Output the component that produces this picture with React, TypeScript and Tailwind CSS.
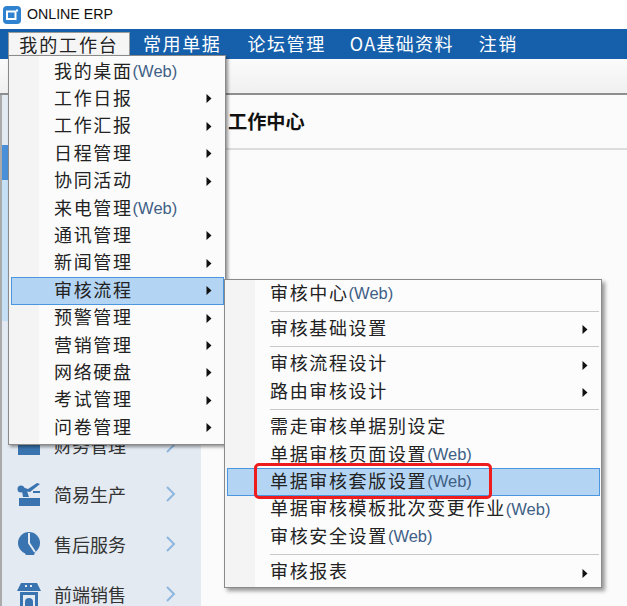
const cjk = "font-['Microsoft_YaHei','Noto_Sans_CJK_SC','Liberation_Sans',sans-serif]";

type MenuItem = { label: string; web?: boolean; arrow?: boolean; active?: boolean; sep?: boolean };

const mainItems: MenuItem[] = [
  { label: "我的桌面", web: true },
  { label: "工作日报", arrow: true },
  { label: "工作汇报", arrow: true },
  { label: "日程管理", arrow: true },
  { label: "协同活动", arrow: true },
  { label: "来电管理", web: true },
  { label: "通讯管理", arrow: true },
  { label: "新闻管理", arrow: true },
  { label: "审核流程", arrow: true, active: true },
  { label: "预警管理", arrow: true },
  { label: "营销管理", arrow: true },
  { label: "网络硬盘", arrow: true },
  { label: "考试管理", arrow: true },
  { label: "问卷管理", arrow: true },
];

const subItems: MenuItem[] = [
  { label: "审核中心", web: true },
  { label: "", sep: true },
  { label: "审核基础设置", arrow: true },
  { label: "", sep: true },
  { label: "审核流程设计", arrow: true },
  { label: "路由审核设计", arrow: true },
  { label: "", sep: true },
  { label: "需走审核单据别设定" },
  { label: "单据审核页面设置", web: true },
  { label: "单据审核套版设置", web: true, active: true },
  { label: "单据审核模板批次变更作业", web: true },
  { label: "审核安全设置", web: true },
  { label: "", sep: true },
  { label: "审核报表", arrow: true },
];

function Arrow({ className }: { className: string }) {
  return (
    <svg width="6" height="9" viewBox="0 0 6 9" className={`absolute ${className}`}>
      <path d="M0.5 0 L5.5 4.5 L0.5 9 Z" fill="#111" />
    </svg>
  );
}

function Row({ item, sub }: { item: MenuItem; sub?: boolean }) {
  if (item.sep) {
    return <div className="h-[8px] ml-[43px] mr-[1px] flex items-center"><div className="h-[1px] w-full bg-[#c8c8c8]" /></div>;
  }
  return (
    <div
      className={`relative h-[27.4px] pb-[4px] pl-[42px] flex items-center whitespace-nowrap border ${
        item.active ? "bg-[#b3d4f2] border-[#4a97e0]" : "border-transparent"
      }`}
    >
      <span className="text-[18px] leading-none tracking-[1.65px] text-[#222]">{item.label}</span>
      {item.web && (
        <span className="mt-[3px] text-[16.5px] leading-none text-[#3f5f86] font-['Liberation_Sans',sans-serif]">(Web)</span>
      )}
      {item.arrow && <Arrow className={sub ? "right-[11px] top-[9px]" : "right-[11px] top-[8px]"} />}
    </div>
  );
}

function Icon({ kind }: { kind: string }) {
  if (kind === "prod") {
    return (
      <svg width="24" height="24" viewBox="0 0 24 24" fill="#3a74b0">
        <path d="M2 16h21v8H2z" />
        <path d="M6 15L5 9h5l2 6z" />
        <circle cx="4" cy="7" r="3.5" />
        <path d="M5 5l6 2 9-6 3 1-10 8-7-1z" />
        <path d="M16 9h7v2h-7z" />
      </svg>
    );
  }
  if (kind === "service") {
    return (
      <svg width="24" height="24" viewBox="0 0 24 24" fill="#3a74b0">
        <circle cx="12" cy="11" r="11" />
        <path d="M6 18h13l-2 5H9z" />
        <path d="M12 1v10l6 9" fill="none" stroke="#e4eaf2" strokeWidth="2" />
      </svg>
    );
  }
  if (kind === "shop") {
    return (
      <svg width="24" height="24" viewBox="0 0 24 24" fill="#3a74b0">
        <path d="M4 1h16l4 8H0zM8 3v2h2V3zM13 3v2h2V3z" fillRule="evenodd" />
        <path d="M3 10h18v14H3zM6 13v11h12V13z" fillRule="evenodd" />
        <path d="M8 20a4 4 0 0 1 8 0v4H8z" />
      </svg>
    );
  }
  return (
    <svg width="24" height="24" viewBox="0 0 24 24" fill="#3a74b0">
      <path d="M1 2h22v20H1z M5 7l3 4h8l3-4z" fillRule="evenodd" />
    </svg>
  );
}

function SideItem({ label, kind }: { label: string; kind: string }) {
  return (
    <div className="h-[49.6px] flex items-center pl-[17px] shrink-0">
      <Icon kind={kind} />
      <span className="ml-[13px] w-[112px] text-[18px] leading-none text-[#333]">{label}</span>
      <svg width="10" height="16" viewBox="0 0 10 16" fill="none" stroke="#8db7de" strokeWidth="2">
        <path d="M1 1l7 7-7 7" />
      </svg>
    </div>
  );
}

export default function App() {
  return (
    <div className={`relative w-[627px] h-[606px] overflow-hidden bg-white ${cjk}`}>
      {/* title bar */}
      <div className="h-[29px] flex items-center pl-[3px] bg-white">
        <svg width="18" height="18" viewBox="0 0 18 18">
          <rect x="0" y="0" width="18" height="18" rx="4" fill="#2f82cf" />
          <path d="M4 5.5h8.5V13H4z" fill="none" stroke="#fff" strokeWidth="2" />
          <rect x="13" y="3.5" width="2" height="2" fill="#fff" />
        </svg>
        <span className="ml-[6px] text-[14.2px] text-[#111] font-['Liberation_Sans',sans-serif]">ONLINE ERP</span>
      </div>

      {/* menu bar */}
      <div className="h-[30px] bg-[#1660ab] flex items-start pt-[3px] pl-[8px] text-white text-[18px] leading-[22px] tracking-[1.6px]">
        <div className="w-[122px] h-[27px] bg-[#f5f5f5] border border-[#999] border-b-0 text-[#222] tracking-[1.9px] text-center">我的工作台</div>
        <div className="ml-[13px]">常用单据</div>
        <div className="ml-[26px]">论坛管理</div>
        <div className="ml-[24px] tracking-[1.3px]">OA基础资料</div>
        <div className="ml-[25px]">注销</div>
      </div>

      {/* toolbar */}
      <div className="h-[36px] bg-gradient-to-b from-[#fbfbfb] to-[#f0f0f0] border-b-2 border-[#8e8e8e]" />

      {/* body */}
      <div className="flex h-[511px]">
        <div className="w-[201px] flex border-l-2 border-[#aaa] bg-[#e4eaf2]">
          <div className="w-[6px] flex flex-col shrink-0">
            <div className="h-[50px]" />
            <div className="h-[35px] bg-[#4a90d9]" />
            <div className="h-[141px] bg-[#c5dff5]" />
          </div>
          <div className="flex-1 -ml-[8px] pt-[325px] flex flex-col">
            <SideItem label="财务管理" kind="finance" />
            <SideItem label="简易生产" kind="prod" />
            <SideItem label="售后服务" kind="service" />
            <SideItem label="前端销售" kind="shop" />
          </div>
        </div>
        <div className="flex-1 bg-[#fbfbfb]">
          <div className="h-[55px] pl-[27px] flex items-center border-b-2 border-[#dcdcdc]">
            <span className="text-[19.2px] font-bold text-[#111]">工作中心</span>
          </div>
        </div>
      </div>

      {/* main dropdown */}
      <div className="absolute left-[8px] top-[55px] w-[218px] h-[390px] bg-[#fbfbfb] border border-[#8a8a8a] shadow-[2px_2px_3px_rgba(0,0,0,0.4)]">
        <div className="absolute left-0 top-0 bottom-0 w-[30px] bg-[#f4f4f4]" />
        <div className="relative pt-[2px] pl-[2px] pr-[1px]">
          {mainItems.map((item) => (
            <Row key={item.label} item={item} />
          ))}
        </div>
      </div>

      {/* sub dropdown */}
      <div className="absolute left-[224px] top-[279px] w-[378px] h-[309px] bg-[#fcfcfc] border border-[#8a8a8a] shadow-[3px_3px_4px_rgba(0,0,0,0.4)]">
        <div className="absolute left-0 top-0 bottom-0 w-[30px] bg-[#f4f4f4]" />
        <div className="relative pl-[2px] pr-[1px]">
          {subItems.map((item, i) => (
            <Row key={i} item={item} sub />
          ))}
        </div>
      </div>

      {/* red highlight */}
      <div className="absolute left-[254px] top-[463px] w-[238px] h-[36px] rounded-[5px] border-[3px] border-[#ee1c1c]" />
    </div>
  );
}
